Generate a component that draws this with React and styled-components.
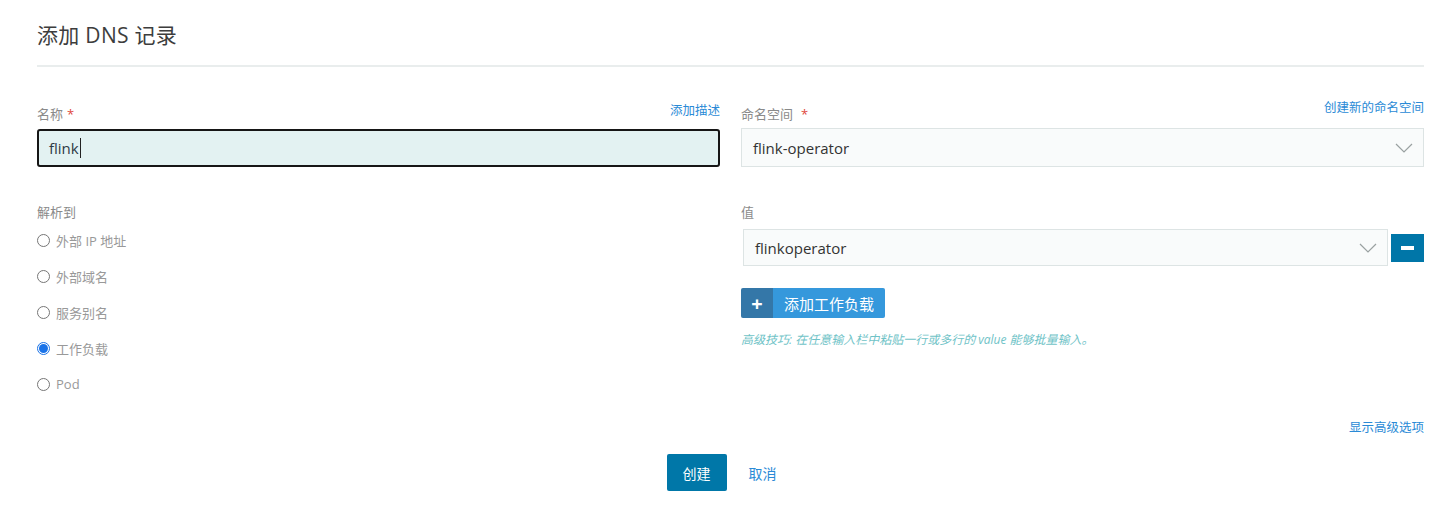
import styled, { createGlobalStyle } from "styled-components";

const GlobalStyle = createGlobalStyle`
  * { box-sizing: border-box; }
  body {
    margin: 0;
    background: #fff;
    font-family: "Open Sans", "Noto Sans CJK SC", sans-serif;
    color: #333;
  }
`;

const Page = styled.div`
  padding: 18px 6px 0 37px;
  width: 1430px;
`;

const Header = styled.h1`
  margin: 0;
  font-size: 21px;
  font-weight: 400;
  color: #3d3d3d;
  line-height: 34px;
  letter-spacing: 0.3px;
  padding-bottom: 13px;
  border-bottom: 2px solid #e9eded;
`;

const Grid = styled.div`
  display: grid;
  grid-template-columns: 683px 683px;
  column-gap: 21px;
  margin-top: 34px;
`;

const Field = styled.div`
  display: flex;
  flex-direction: column;
  margin-top: ${(p) => p.$offset || 0}px;
`;

const LabelRow = styled.div`
  display: flex;
  justify-content: space-between;
  align-items: flex-end;
  height: 22px;
  margin-bottom: ${(p) => p.$gap || 8}px;
`;

const Label = styled.label`
  font-size: 13px;
  color: #8a8a8a;
  line-height: 18px;
`;

const Required = styled.span`
  color: #e0473b;
  margin-left: ${(p) => p.$space || 4}px;
`;

const LinkText = styled.a`
  font-size: 12.5px;
  color: #2a8ad6;
  line-height: 18px;
  cursor: pointer;
  text-decoration: none;
  align-self: ${(p) => (p.$raised ? "flex-start" : "auto")};
  margin-top: ${(p) => (p.$raised ? -2 : 0)}px;
  margin-bottom: ${(p) => (p.$lift ? 3 : 0)}px;
`;

const TextInput = styled.div`
  height: 38px;
  border: 2px solid #161616;
  border-radius: 3px;
  background: #e3f2f2;
  display: flex;
  align-items: center;
  padding-left: 10px;
  font-size: 15px;
  color: #2f3a46;
`;

const Caret = styled.span`
  display: inline-block;
  width: 1px;
  height: 20px;
  background: #222;
  margin-left: 1px;
`;

const Select = styled.div`
  flex: 1;
  height: 37px;
  border: 1px solid #dde4e4;
  background: #f9fbfb;
  display: flex;
  align-items: center;
  justify-content: space-between;
  padding: 0 10px 0 11px;
  font-size: 15px;
  color: #333;
`;

const Chevron = () => (
  <svg width="18" height="10" viewBox="0 0 18 10">
    <path d="M1 1 L9 9 L17 1" fill="none" stroke="#9aa1a1" strokeWidth="1.2" />
  </svg>
);

const ValueRow = styled.div`
  display: flex;
  align-items: center;
  gap: 3px;
  margin-left: 2px;
`;

const MinusButton = styled.button`
  width: 33px;
  height: 28px;
  border: none;
  background: #0076a8;
  display: flex;
  align-items: center;
  justify-content: center;
  padding: 0;
  &::after {
    content: "";
    width: 13px;
    height: 4px;
    background: #fff;
  }
`;

const RadioList = styled.div`
  display: flex;
  flex-direction: column;
  gap: 18px;
`;

const RadioItem = styled.label`
  display: flex;
  align-items: center;
  gap: 6px;
  font-size: 13px;
  color: #999;
  height: 18px;
`;

const RadioCircle = styled.span`
  width: 13px;
  height: 13px;
  border-radius: 50%;
  border: ${(p) => (p.$checked ? "1px solid #1a73e8" : "1px solid #767676")};
  background: #fff;
  display: flex;
  align-items: center;
  justify-content: center;
  &::after {
    content: "";
    display: ${(p) => (p.$checked ? "block" : "none")};
    width: 9px;
    height: 9px;
    border-radius: 50%;
    background: #1a73e8;
  }
`;

const AddButton = styled.button`
  display: flex;
  height: 30px;
  border: none;
  padding: 0;
  margin-top: 22px;
  align-self: flex-start;
  border-radius: 2px;
  overflow: hidden;
  font-family: inherit;
`;

const AddIcon = styled.span`
  width: 32px;
  background: #3477a8;
  color: #fff;
  font-size: 20px;
  font-weight: 700;
  display: flex;
  align-items: center;
  justify-content: center;
`;

const AddLabel = styled.span`
  background: #3598dc;
  color: #fff;
  font-size: 15px;
  padding: 0 11px 0 11px;
  display: flex;
  align-items: center;
`;

const Tip = styled.p`
  margin: 12px 0 0 0;
  font-size: 12px;
  font-style: italic;
  color: #6fc3c7;
`;

const Advanced = styled.div`
  display: flex;
  justify-content: flex-end;
  margin-top: 26px;
`;

const Footer = styled.div`
  display: flex;
  justify-content: center;
  align-items: center;
  gap: 22px;
  margin-top: 17px;
  padding-right: 18px;
`;

const PrimaryButton = styled.button`
  width: 60px;
  height: 37px;
  border: none;
  border-radius: 2px;
  background: #0077a8;
  color: #fff;
  font-size: 14px;
  font-family: inherit;
`;

const CancelLink = styled.a`
  font-size: 14px;
  color: #2a8ad6;
  cursor: pointer;
`;

const options = ["外部 IP 地址", "外部域名", "服务别名", "工作负载", "Pod"];

export default function App() {
  return (
    <>
      <GlobalStyle />
      <Page>
        <Header>添加 DNS 记录</Header>
        <Grid>
          <Field>
            <LabelRow $gap={6}>
              <Label>
                名称<Required>*</Required>
              </Label>
              <LinkText $lift>添加描述</LinkText>
            </LabelRow>
            <TextInput>
              flink
              <Caret />
            </TextInput>
          </Field>
          <Field>
            <LabelRow $gap={5}>
              <Label>
                命名空间<Required $space={8}>*</Required>
              </Label>
              <LinkText $raised>创建新的命名空间</LinkText>
            </LabelRow>
            <Select>
              flink-operator
              <Chevron />
            </Select>
          </Field>

          <Field $offset={32}>
            <LabelRow $gap={10}>
              <Label>解析到</Label>
            </LabelRow>
            <RadioList>
              {options.map((o) => (
                <RadioItem key={o}>
                  <RadioCircle $checked={o === "工作负载"} />
                  {o}
                </RadioItem>
              ))}
            </RadioList>
          </Field>
          <Field $offset={32}>
            <LabelRow $gap={8}>
              <Label>值</Label>
            </LabelRow>
            <ValueRow>
              <Select>
                flinkoperator
                <Chevron />
              </Select>
              <MinusButton />
            </ValueRow>
            <AddButton>
              <AddIcon>+</AddIcon>
              <AddLabel>添加工作负载</AddLabel>
            </AddButton>
            <Tip>高级技巧: 在任意输入栏中粘贴一行或多行的 value 能够批量输入。</Tip>
          </Field>
        </Grid>
        <Advanced>
          <LinkText>显示高级选项</LinkText>
        </Advanced>
        <Footer>
          <PrimaryButton>创建</PrimaryButton>
          <CancelLink>取消</CancelLink>
        </Footer>
      </Page>
    </>
  );
}
